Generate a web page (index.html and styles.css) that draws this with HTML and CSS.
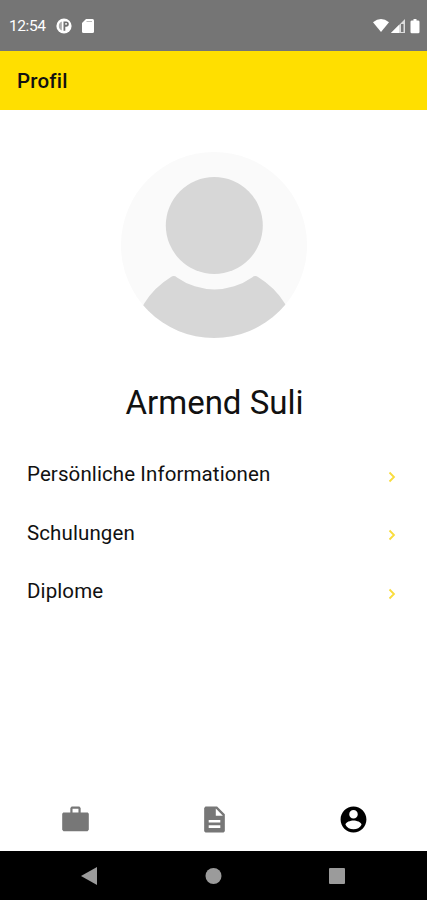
FILE: index.html
```html
<!DOCTYPE html>
<html lang="de">
<head>
    <meta charset="UTF-8">
    <meta name="viewport" content="width=device-width, initial-scale=1.0">
    <title>Profil</title>
    <link rel="stylesheet" href="styles.css">
</head>
<body>
    <div class="screen">
        <div class="status-bar">
            <span class="time">12:54</span>
            <svg class="app-icon" width="16" height="16" viewBox="0 0 16 16">
                <circle cx="8" cy="8" r="7.6" fill="#fff"/>
                <path d="M5.800 3.500v9C3.800 11.800 2.800 10.200 2.800 8s1-3.800 3-4.500z" fill="#aaa"/>
                <path d="M7.500 3.500h2.700a2.600 2.600 0 0 1 0 5.200H9.300v4H7.500z" fill="#707070"/>
                <path d="M9.300 5h1.500v1.800H9.300z" fill="#fff"/>
            </svg>
            <svg class="card-icon" width="12" height="14" viewBox="0 0 12 14">
                <path d="M4 0h6.500Q12 0 12 1.500v11q0 1.500-1.500 1.500h-9Q0 14 0 12.500V4z" fill="#fff"/>
                <path d="M4.500 2H10v1H4.500z" fill="#bbb"/>
            </svg>
            <svg class="system-icons" width="47" height="16" viewBox="0 0 47 16">
                <path d="M0 4.200Q8-2.200 16 4.200L8 14z" fill="#fff"/>
                <path d="M32 1v14H18z" fill="#dcdcdc"/>
                <path d="M28 6v8h2.500V6z" fill="#777"/>
                <path d="M26 7v8h-8z" fill="#fff"/>
                <path d="M40.500 1h3v1.500H45q1.500 0 1.500 1.300V14q0 1.300-1.300 1.300h-6.400q-1.300 0-1.300-1.300V3.800q0-1.300 1.500-1.300h1.500z" fill="#fff"/>
            </svg>
        </div>

        <header class="app-bar">
            <h1>Profil</h1>
        </header>

        <main class="profile">
            <svg class="avatar" width="188" height="188" viewBox="0 0 188 188">
                <clipPath id="avatarClip"><circle cx="94" cy="94" r="93"/></clipPath>
                <circle cx="94" cy="94" r="93" fill="#fafafa"/>
                <g clip-path="url(#avatarClip)">
                    <path d="M12 188A82 82 0 0 1 51 126Q54 124 57 126.500A65 65 0 0 0 132 126.500Q135 124 138 126A82 82 0 0 1 177 188z" fill="#d7d7d7"/>
                </g>
                <circle cx="94.300" cy="74.500" r="48.500" fill="#d7d7d7"/>
            </svg>
            <h2>Armend Suli</h2>
            <ul class="menu">
                <li>
                    <span>Persönliche Informationen</span>
                    <svg width="8" height="12" viewBox="0 0 8 12"><path d="M1.500 1.500 6 6l-4.500 4.500"/></svg>
                </li>
                <li>
                    <span>Schulungen</span>
                    <svg width="8" height="12" viewBox="0 0 8 12"><path d="M1.500 1.500 6 6l-4.500 4.500"/></svg>
                </li>
                <li>
                    <span>Diplome</span>
                    <svg width="8" height="12" viewBox="0 0 8 12"><path d="M1.500 1.500 6 6l-4.500 4.500"/></svg>
                </li>
            </ul>
        </main>

        <nav class="tab-bar">
            <svg viewBox="0 0 24 24"><path d="M21.500 6.500H16V3l-1-1H9L8 3v3.500H2.500l-.800 1V20l1 1h18.600l1-1V7.500zM9.700 6.500V3.700h4.600v2.800z"/></svg>
            <svg viewBox="0 0 24 24"><path d="M14 2H5L4 3v18l1 1h14l1-1V8zm2.500 16.500h-9v-2h9zm0-4.200h-9v-2h9zM13 9V3.500L18.500 9z"/></svg>
            <svg class="active" viewBox="0 0 24 24"><path d="M12 2C6.480 2 2 6.480 2 12s4.480 10 10 10 10-4.480 10-10S17.520 2 12 2zm0 2.600c1.900 0 3.300 1.400 3.300 3.300s-1.400 3.300-3.300 3.300-3.300-1.400-3.300-3.300 1.400-3.300 3.300-3.300zm0 15c-2.700 0-5-1.400-6.200-3.600.03-2 4-3.200 6.200-3.200 2.200 0 6.170 1.200 6.200 3.200-1.200 2.200-3.500 3.600-6.200 3.600z"/></svg>
        </nav>

        <div class="system-nav">
            <svg width="18" height="18" viewBox="0 0 18 18"><path d="M1 9 17 0v18z"/></svg>
            <svg width="18" height="18" viewBox="0 0 18 18"><circle cx="9.500" cy="9" r="8"/></svg>
            <svg width="18" height="18" viewBox="0 0 18 18"><rect x="1" y="1" width="16" height="16" rx="1"/></svg>
        </div>
    </div>
</body>
</html>
```
FILE: styles.css
```css
body {
    margin: 0;
    font-family: Roboto, sans-serif;
    color: #111;
    background-color: #fff;
}
svg {
    display: block;
    flex-shrink: 0;
}
.screen {
    display: flex;
    flex-direction: column;
    height: 900px;
    overflow: hidden;
}
.status-bar {
    display: flex;
    align-items: center;
    box-sizing: border-box;
    height: 51px;
    padding: 1px 7px 0 9px;
    background-color: #757575;
    color: #fff;
}
.time {
    width: 47px;
    font-size: 15.500px;
    letter-spacing: -0.4px;
}
.card-icon {
    margin-left: 10px;
}
.system-icons {
    margin-left: auto;
}
.app-bar {
    display: flex;
    align-items: center;
    height: 59px;
    padding: 0 17px;
    background-color: #ffdf00;
}
h1 {
    margin: 0;
    font-size: 20.500px;
    font-weight: 500;
    letter-spacing: 0.2px;
}
.profile {
    flex: 1;
}
.avatar {
    margin: 41px auto 0 120px;
}
h2 {
    margin: 44px 0 0 2px;
    font-size: 33px;
    font-weight: 400;
    line-height: 40px;
    text-align: center;
}
.menu {
    list-style: none;
    margin: 22px 0 0;
    padding: 0 31px 0 27px;
}
.menu li {
    display: flex;
    align-items: center;
    justify-content: space-between;
    height: 58.500px;
    font-size: 20.500px;
    letter-spacing: 0.1px;
}
.menu svg {
    margin-top: 5px;
    fill: none;
    stroke: #f9dc3c;
    stroke-width: 1.800;
}
.tab-bar {
    display: flex;
    justify-content: space-between;
    align-items: center;
    height: 63px;
    padding: 0 58px 0 60px;
}
.tab-bar svg {
    width: 31px;
    height: 31px;
    fill: #777;
}
.tab-bar .active {
    fill: #000;
}
.system-nav {
    display: flex;
    justify-content: space-between;
    align-items: center;
    height: 49px;
    padding: 0 81px 0 80px;
    background-color: #000;
}
.system-nav svg {
    fill: #9b9b9b;
}
```
